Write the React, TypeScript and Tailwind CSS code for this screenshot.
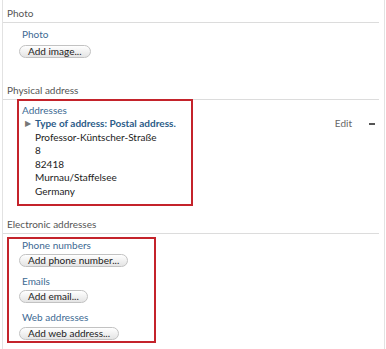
const font = { fontFamily: 'Lato, "Noto Sans", sans-serif' };

function SectionHeader({ title }: { title: string }) {
  return (
    <div className="mr-[5px] h-[23px] border-b border-[#dcdcdc] pl-[4px] pt-[6px] text-[10px] leading-[14px] text-[#555]">
      {title}
    </div>
  );
}

function Label({ children }: { children: string }) {
  return <div className="h-[14px] text-[10px] leading-[14px] text-[#3d6a93]">{children}</div>;
}

function PillButton({ children }: { children: string }) {
  return (
    <button className="flex h-[13px] items-center rounded-full border border-[#c2c2c2] bg-gradient-to-b from-white to-[#e4e4e4] px-[8px] text-[10px] leading-[11px] text-[#222]">
      {children}
    </button>
  );
}

export default function App() {
  return (
    <div className="relative h-[349px] w-[386px] overflow-hidden bg-white" style={font}>
      <div className="ml-[2px] h-[349px] w-[383px] border-l border-r border-[#e2e2e2]">
        <SectionHeader title="Photo" />
        <div className="pl-[16px] pt-[4px]">
          <div className="pl-[3px]">
            <Label>Photo</Label>
          </div>
          <div className="mt-[4px]">
            <PillButton>Add image...</PillButton>
          </div>
        </div>

        <div className="mt-[19px]">
          <SectionHeader title="Physical address" />
        </div>
        <div className="pl-[16px] pt-[3px] text-[10px] leading-[13.5px] text-[#222]">
          <div className="pl-[3px]">
            <Label>Addresses</Label>
          </div>
          <div className="flex h-[13.5px] items-center">
            <span className="ml-[6px] w-[10px] text-[8px] leading-[13.5px] text-[#777]">▶</span>
            <span className="font-bold text-[#2c5c88]">Type of address: Postal address.</span>
            <span className="ml-auto text-[#666]">Edit</span>
            <span className="ml-[17px] mr-[9px] h-[1.5px] w-[6px] bg-[#555]" />
          </div>
          <div className="pl-[16px]">
            <div className="h-[13.5px]">Professor-Küntscher-Straße</div>
            <div className="h-[13.5px]">8</div>
            <div className="h-[13.5px]">82418</div>
            <div className="h-[13.5px]">Murnau/Staffelsee</div>
            <div className="h-[13.5px]">Germany</div>
          </div>
        </div>

        <div className="mt-[13px]">
          <SectionHeader title="Electronic addresses" />
        </div>
        <div className="pl-[16px] pt-[4px]">
          <div className="pl-[3px]">
            <Label>Phone numbers</Label>
          </div>
          <div className="mt-[2px]">
            <PillButton>Add phone number...</PillButton>
          </div>
          <div className="mt-[7px] pl-[3px]">
            <Label>Emails</Label>
          </div>
          <div className="mt-[2px]">
            <PillButton>Add email...</PillButton>
          </div>
          <div className="mt-[7px] pl-[3px]">
            <Label>Web addresses</Label>
          </div>
          <div className="mt-[3px]">
            <PillButton>Add web address...</PillButton>
          </div>
        </div>
      </div>

      <div className="pointer-events-none absolute left-[17px] top-[99px] h-[107px] w-[176px] border-2 border-[#c4232b]" />
      <div className="pointer-events-none absolute left-[7px] top-[237px] h-[106px] w-[149px] border-2 border-[#c4232b]" />
    </div>
  );
}
